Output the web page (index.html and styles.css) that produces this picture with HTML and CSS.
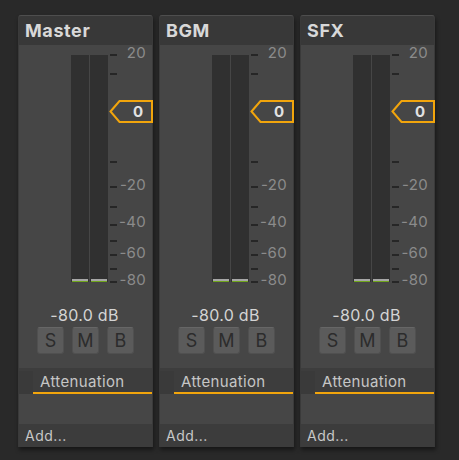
FILE: index.html
```html
<!DOCTYPE html>
<html>
<head>
<meta charset="utf-8">
<link rel="stylesheet" href="styles.css">
</head>
<body>
<div class="mixer">
  <div class="strip">
    <div class="strip-head">Master</div>
    <div class="strip-body">
      <div class="meter">
        <div class="bars">
          <div class="bar"><div class="level"></div></div>
          <div class="bar"><div class="level"></div></div>
        </div>
        <div class="scale">
          <i class="tick" style="top:9px"></i><i class="tick" style="top:28px"></i><i class="tick" style="top:116px"></i><i class="tick" style="top:141px"></i><i class="tick" style="top:161px"></i><i class="tick" style="top:179px"></i><i class="tick" style="top:195px"></i><i class="tick" style="top:209px"></i><i class="tick" style="top:223px"></i><i class="tick" style="top:236px"></i>
          <span class="lbl" style="top:0px">20</span>
          <span class="lbl" style="top:132px">-20</span>
          <span class="lbl" style="top:169px">-40</span>
          <span class="lbl" style="top:200px">-60</span>
          <span class="lbl" style="top:227px">-80</span>
          <div class="marker">
            <svg class="marker-shape" width="44" height="23" viewBox="0 0 44 23"><polygon points="1.5,11.5 10.5,1 43,1 43,22 10.5,22" /></svg>
            <span class="marker-val">0</span>
          </div>
        </div>
      </div>
      <div class="db">-80.0 dB</div>
      <div class="btns"><span class="btn">S</span><span class="btn">M</span><span class="btn">B</span></div>
    </div>
    <div class="effects">
      <div class="fx-row"><div class="fx-handle"></div><div class="fx-name">Attenuation</div></div>
    </div>
    <div class="spacer"></div>
    <div class="foot">Add...</div>
  </div>

  <div class="strip">
    <div class="strip-head">BGM</div>
    <div class="strip-body">
      <div class="meter">
        <div class="bars">
          <div class="bar"><div class="level"></div></div>
          <div class="bar"><div class="level"></div></div>
        </div>
        <div class="scale">
          <i class="tick" style="top:9px"></i><i class="tick" style="top:28px"></i><i class="tick" style="top:116px"></i><i class="tick" style="top:141px"></i><i class="tick" style="top:161px"></i><i class="tick" style="top:179px"></i><i class="tick" style="top:195px"></i><i class="tick" style="top:209px"></i><i class="tick" style="top:223px"></i><i class="tick" style="top:236px"></i>
          <span class="lbl" style="top:0px">20</span>
          <span class="lbl" style="top:132px">-20</span>
          <span class="lbl" style="top:169px">-40</span>
          <span class="lbl" style="top:200px">-60</span>
          <span class="lbl" style="top:227px">-80</span>
          <div class="marker">
            <svg class="marker-shape" width="44" height="23" viewBox="0 0 44 23"><polygon points="1.5,11.5 10.5,1 43,1 43,22 10.5,22" /></svg>
            <span class="marker-val">0</span>
          </div>
        </div>
      </div>
      <div class="db">-80.0 dB</div>
      <div class="btns"><span class="btn">S</span><span class="btn">M</span><span class="btn">B</span></div>
    </div>
    <div class="effects">
      <div class="fx-row"><div class="fx-handle"></div><div class="fx-name">Attenuation</div></div>
    </div>
    <div class="spacer"></div>
    <div class="foot">Add...</div>
  </div>

  <div class="strip">
    <div class="strip-head">SFX</div>
    <div class="strip-body">
      <div class="meter">
        <div class="bars">
          <div class="bar"><div class="level"></div></div>
          <div class="bar"><div class="level"></div></div>
        </div>
        <div class="scale">
          <i class="tick" style="top:9px"></i><i class="tick" style="top:28px"></i><i class="tick" style="top:116px"></i><i class="tick" style="top:141px"></i><i class="tick" style="top:161px"></i><i class="tick" style="top:179px"></i><i class="tick" style="top:195px"></i><i class="tick" style="top:209px"></i><i class="tick" style="top:223px"></i><i class="tick" style="top:236px"></i>
          <span class="lbl" style="top:0px">20</span>
          <span class="lbl" style="top:132px">-20</span>
          <span class="lbl" style="top:169px">-40</span>
          <span class="lbl" style="top:200px">-60</span>
          <span class="lbl" style="top:227px">-80</span>
          <div class="marker">
            <svg class="marker-shape" width="44" height="23" viewBox="0 0 44 23"><polygon points="1.5,11.5 10.5,1 43,1 43,22 10.5,22" /></svg>
            <span class="marker-val">0</span>
          </div>
        </div>
      </div>
      <div class="db">-80.0 dB</div>
      <div class="btns"><span class="btn">S</span><span class="btn">M</span><span class="btn">B</span></div>
    </div>
    <div class="effects">
      <div class="fx-row"><div class="fx-handle"></div><div class="fx-name">Attenuation</div></div>
    </div>
    <div class="spacer"></div>
    <div class="foot">Add...</div>
  </div>
</div>
</body>
</html>
```

FILE: styles.css
```css
html, body {
  margin: 0;
  padding: 0;
  background: #292929;
  width: 459px;
  height: 460px;
  overflow: hidden;
  font-family: Inter, "Noto Sans", sans-serif;
}

.mixer {
  display: flex;
  gap: 6px;
  padding: 15px 0 0 18px;
}

.strip {
  width: 135px;
  box-sizing: border-box;
  border: 1px solid #3a3a3a;
  border-top-color: #4e4e4e;
  border-bottom: none;
  border-radius: 3px 3px 0 0;
  background: #464646;
  display: flex;
  flex-direction: column;
  box-shadow: 1px 3px 4px rgba(0, 0, 0, 0.45);
}

.strip-head {
  height: 29px;
  background: #383838;
  color: #d8d8d8;
  font-weight: 700;
  font-size: 18px;
  line-height: 29px;
  padding-left: 6px;
  letter-spacing: 0.6px;
  border-radius: 2px 2px 0 0;
}

.strip-body {
  height: 323px;
  display: flex;
  flex-direction: column;
}

.meter {
  height: 238px;
  display: flex;
}

.bars {
  display: flex;
  gap: 1px;
  margin: 10px 0 0 52px;
  height: 227px;
}

.bar {
  width: 18px;
  background: #303030;
  position: relative;
}

.level {
  position: absolute;
  left: 1px;
  right: 1px;
  bottom: 0;
  height: 2px;
  background: #a6a6a6;
  border-bottom: 1px solid #6fa51b;
}

.scale {
  position: relative;
  margin-left: 2px;
  width: 43px;
}

.tick {
  position: absolute;
  left: 0;
  width: 7px;
  height: 2px;
  background: #262626;
}

.lbl {
  position: absolute;
  right: 6px;
  font-size: 15px;
  line-height: 16px;
  color: #8b8b8b;
  letter-spacing: 0.3px;
}

.marker {
  position: absolute;
  left: -1px;
  top: 55px;
  width: 44px;
  height: 23px;
}

.marker-shape {
  display: block;
}

.marker-shape polygon {
  fill: #464646;
  stroke: #f2a50c;
  stroke-width: 2;
  stroke-linejoin: miter;
}

.marker-val {
  position: absolute;
  right: 10px;
  top: 0;
  line-height: 23px;
  font-size: 15px;
  font-weight: 700;
  color: #e2e2e2;
}

.db {
  margin-top: 22px;
  text-align: center;
  font-size: 16px;
  line-height: 20px;
  color: #d4d4d4;
  padding-right: 2px;
  letter-spacing: 0.3px;
}

.btns {
  display: flex;
  justify-content: center;
  gap: 8px;
  margin-top: 2px;
}

.btn {
  width: 27px;
  height: 27px;
  box-sizing: border-box;
  border-radius: 3px;
  background: #5b5b5b;
  border: 1px solid #505050;
  border-top-color: #666;
  color: #2c2c2c;
  font-size: 18px;
  line-height: 25px;
  text-align: center;
}

.effects {
  background: #3d3d3d;
  padding-top: 3px;
}

.fx-row {
  display: flex;
  height: 23px;
}

.fx-handle {
  width: 14px;
  background: #3a3a3a;
}

.fx-name {
  flex: 1;
  padding: 1px 0 0 7px;
  font-size: 15px;
  line-height: 20px;
  color: #c6c6c6;
  letter-spacing: 0.35px;
  border-bottom: 2px solid #f2a50c;
}

.spacer {
  height: 30px;
}

.foot {
  height: 23px;
  box-sizing: border-box;
  background: #3c3c3c;
  padding: 1px 0 0 6px;
  font-size: 14px;
  line-height: 22px;
  color: #c8c8c8;
  letter-spacing: 0.5px;
}
```
